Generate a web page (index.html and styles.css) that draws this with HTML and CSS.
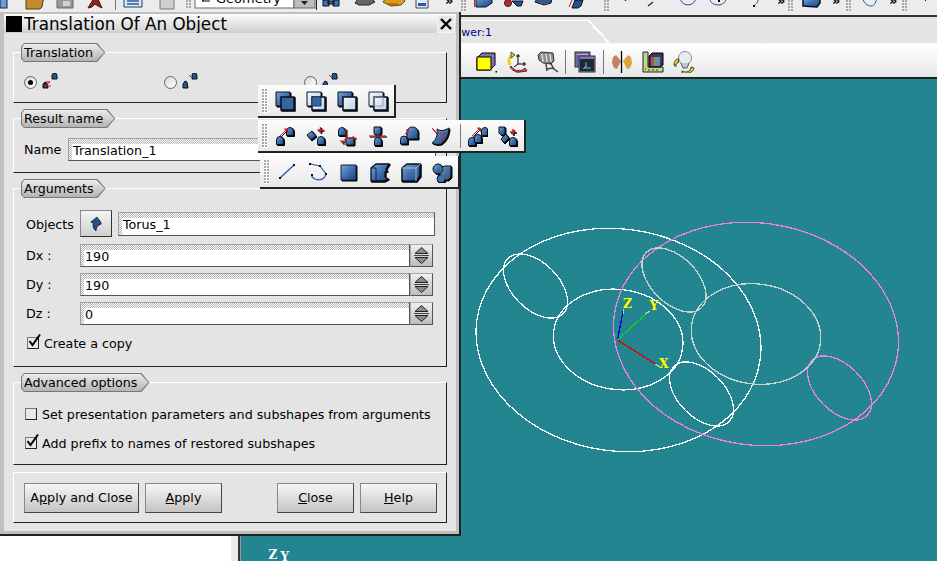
FILE: index.html
```html
<!DOCTYPE html>
<html lang="en">
<head>
<meta charset="utf-8">
<title>Translation Of An Object</title>
<link rel="stylesheet" href="styles.css">
</head>
<body>
<svg class="defs" aria-hidden="true">
  <defs>
    <linearGradient id="bl" x1="0" y1="0" x2="1" y2="1"><stop offset="0" stop-color="#7da6d8"/><stop offset=".5" stop-color="#3f70ad"/><stop offset="1" stop-color="#1c4478"/></linearGradient>
    <linearGradient id="lt" x1="0" y1="0" x2="1" y2="1"><stop offset="0" stop-color="#f4f8fd"/><stop offset="1" stop-color="#bcd0e6"/></linearGradient>
    <path id="dome" d="M.5 8.500V4a3.500 3.500 0 0 1 7 0v4.500z" fill="url(#bl)" stroke="#06111f"/>
    <symbol id="b1" viewBox="0 0 20 20"><path d="M1 1h14v14H1z" fill="url(#bl)" stroke="#06111f"/><path d="M6 6h13v13H6z" fill="#34659f" stroke="#06111f" stroke-width="1.500"/></symbol>
    <symbol id="b2" viewBox="0 0 20 20"><path d="M1 1h14v14H1z" fill="url(#lt)" stroke="#06111f"/><path d="M6 6h13v13H6z" fill="url(#lt)" stroke="#06111f" stroke-width="1.500"/><path d="M6 6h9v9H6z" fill="#34659f" stroke="#1c3c66"/></symbol>
    <symbol id="b3" viewBox="0 0 20 20"><path d="M1 1h14v14H1z" fill="url(#bl)" stroke="#06111f"/><path d="M6 6h13v13H6z" fill="url(#lt)" stroke="#06111f" stroke-width="1.500"/></symbol>
    <symbol id="b4" viewBox="0 0 20 20"><path d="M1 1h14v14H1z" fill="url(#lt)" stroke="#223"/><path d="M6 6h13v13H6z" fill="url(#lt)" stroke="#06111f" stroke-width="1.500"/><path d="M6 6h9v9H6z" fill="none" stroke="#99a"/></symbol>
    <symbol id="t1" viewBox="0 0 20 20"><use href="#dome" x="1" y="10"/><use href="#dome" x="11" y="1"/><path d="M5 10 12 3M9 3h3.500v3.500" fill="none" stroke="#d01828"/></symbol>
    <symbol id="t2" viewBox="0 0 20 20"><path d="M1 9l5-4 4 5-5 4z" fill="url(#bl)" stroke="#06111f"/><use href="#dome" x="11" y="10"/><path d="M14.500 1v6M11.500 4h6" stroke="#d01828" stroke-width="1.500"/></symbol>
    <symbol id="t3" viewBox="0 0 20 20"><use href="#dome" x="1" y="1"/><path d="M9 12h8v7H9z" fill="url(#bl)" stroke="#06111f"/><path d="M9 3v11M9 12h10M16 10v4M9 12l-4 5M3 15h3v3" fill="none" stroke="#d01828"/></symbol>
    <symbol id="t4" viewBox="0 0 20 20"><path d="M6 1h7v6l-1 2H7L6 7z" fill="url(#bl)" stroke="#06111f"/><path d="M1 10h17" stroke="#d01828" stroke-width="1.200"/><use href="#dome" x="6" y="11"/></symbol>
    <symbol id="t5" viewBox="0 0 20 20"><use href="#dome" x="1" y="9.500"/><path d="M8 13V6a5.500 5 0 0 1 11 0v7z" fill="url(#bl)" stroke="#06111f"/><path d="M6 8l4-4M7 4h3v3" fill="none" stroke="#d01828"/></symbol>
    <symbol id="t6" viewBox="0 0 20 20"><path d="M7 3c4 3 8 1 12-1 0 6-3 13-8 16-4 1-7 0-9-1 4-3 6-8 5-14z" fill="url(#bl)" stroke="#06111f"/><path d="M2 2l4 5 6 1M10 18c3-3 5-7 5-12" fill="none" stroke="#d01828"/></symbol>
    <symbol id="t7" viewBox="0 0 20 20"><use href="#dome" x="1" y="11"/><use href="#dome" x="7" y="8"/><use href="#dome" x="14" y="1"/><path d="M5 10 13 2M10 2h3v3" fill="none" stroke="#d01828"/></symbol>
    <symbol id="t8" viewBox="0 0 20 20"><path d="M1 1h6v6l-1 2H3L1 7z" fill="url(#bl)" stroke="#06111f"/><path d="M3 13l5-5 3 4-5 5z" fill="url(#bl)" stroke="#06111f"/><use href="#dome" x="11" y="11"/><path d="M15 3v6M12 6h6" stroke="#d01828" stroke-width="1.500"/></symbol>
    <symbol id="s1" viewBox="0 0 20 20"><path d="M3 16 17 3" stroke="#2a5a9a" stroke-width="1.300"/><path d="M2 15h2v2H2zM16 2h2v2h-2z" fill="#06111f"/></symbol>
    <symbol id="s2" viewBox="0 0 20 20"><path d="M2 2l10 2 6 8c-1 5-6 7-11 5-2-1-4-2-3-4" fill="none" stroke="#2a5a9a" stroke-width="1.200"/><path d="M1 1h2v2H1zM11 3h2v2h-2zM17 11h2v2h-2zM3 12h2v2H3z" fill="#06111f"/></symbol>
    <symbol id="s3" viewBox="0 0 20 20"><path d="M2 3h15v15H2z" fill="url(#bl)" stroke="#0c2240"/></symbol>
    <symbol id="s4" viewBox="0 0 20 20"><path d="M1 6l5-4h13l-3 5 1 2-2 1v5l3 2-4 2H1z" fill="url(#bl)" stroke="#06111f" stroke-width="1.300"/><path d="M6 6V18M1 6h5" stroke="#0c2240" fill="none"/></symbol>
    <symbol id="s5" viewBox="0 0 20 20"><path d="M1 6l5-4h13v12l-4 5H1z" fill="url(#bl)" stroke="#06111f" stroke-width="1.500"/><path d="M1 6h14v13M15 6l4-4" stroke="#9db9dc" fill="none"/></symbol>
    <symbol id="s6" viewBox="0 0 20 20"><path d="M9 7l3-3h7v11l-3 3H9z" fill="url(#bl)" stroke="#06111f"/><circle cx="6" cy="7" r="5" fill="url(#bl)" stroke="#06111f"/><path d="M9 13a4 4 0 1 0 4 4" fill="#3f70ad" stroke="#06111f"/><path d="M9 7h7v9H9z" fill="none" stroke="#6b6b6b"/></symbol>
    <symbol id="r1" viewBox="0 0 16 16"><path d="M1 11l2-2 2 1 1 5H1z" fill="#16345e" stroke="#06111f"/><path d="M10 6V2.500a2 2 0 0 1 5 0V6z" fill="#27538c" stroke="#06111f"/><path d="M2 14l6-5M4 9l4-.5M5 13h4" stroke="#d01828" fill="none"/></symbol>
    <symbol id="r2" viewBox="0 0 16 16"><path d="M1 11l2-3 2 1 1 6H1z" fill="#27538c" stroke="#06111f"/><path d="M10 6V2.500a2 2 0 0 1 5 0V6z" fill="#27538c" stroke="#06111f"/><path d="M7 2l2 2" stroke="#d01828"/></symbol>
    <symbol id="spin" viewBox="0 0 21 21"><path d="M10.500 2.500 17 8.500H4z" fill="#8a8a8a" stroke="#222"/><path d="M3 10.500h15" stroke="#444"/><path d="M4 12.500h13l-6.500 6z" fill="#8a8a8a" stroke="#222"/></symbol>
    <symbol id="tick" viewBox="0 0 16 16"><path d="M3.500 8l3 4L14 1.500" fill="none" stroke="#000" stroke-width="2"/></symbol>
  </defs>
</svg>

<div class="app">
  <svg class="top-strip" viewBox="0 0 937 15" role="img" aria-label="Main toolbars">
    <rect x="0" y="-6" width="7" height="14" fill="#6f9bdc" stroke="#123"/>
    <path d="M26 9V-4h18l-2 11-2 2z" fill="#c08a30" stroke="#5a3a08"/>
    <path d="M57 8V-4h16V8z" fill="#9a9a9a" stroke="#666"/><rect x="63" y="1" width="7" height="5" fill="#d0d0d0"/>
    <path d="M88 8l6-10 3-1 5 11-4-2-3-2-3 3z" fill="#8e2626" stroke="#4a0e0e"/>
    <rect x="115" y="0" width="1" height="10" fill="#777"/>
    <path d="M124 -2h18v9h-18z" fill="#dfe8f4" stroke="#1c3c66"/><path d="M127 1h12M127 4h12" stroke="#2a5a9a" stroke-width="1.500"/>
    <path d="M155-2h13v9h6" fill="#c8c8c8" stroke="#777"/><path d="M160-2h14V9h-14z" fill="#cfcfcf" stroke="#777"/>
    <path d="M189 0h2v2h-2zM189 3h2v2h-2zM189 6h2v2h-2zM186 3h2v2h-2zM186 6h2v2h-2zM186 0h2v2h-2z" fill="#a8a8a8"/>
    <rect x="195" y="-3" width="99" height="11" fill="#fff" stroke="#666"/>
    <path d="M202 1h8M202 1l3-2" stroke="#000" fill="none"/>
    <text class="combo-text" x="216" y="3">Geometry</text>
    <rect x="294" y="-3" width="21" height="11" fill="#bdbdbd" stroke="#666"/><path d="M301 1h7l-3.500 4z" fill="#222"/>
    <rect x="316" y="-1" width="1" height="11" fill="#222"/>
    <path d="M323 0h6v6h-6zM333 0h6v6h-6zM328 1h6v3h-6z" fill="#3f70ad" stroke="#06111f"/>
    <path d="M355 3l3-4h14l3 3-6 3h-10z" fill="#666" stroke="#222"/>
    <path d="M383 2l4-5h14l4 4-4 4-10 1z" fill="#d4a020" stroke="#6a4a08"/><path d="M388 4h10" stroke="#c03020"/>
    <path d="M416-2h12V8h-12z" fill="#dfe8f4" stroke="#445"/><rect x="418" y="3" width="8" height="3" fill="#2a5a9a"/>
    <text class="chev" x="445" y="5">»</text>
    <path d="M461 0h2v2h-2zM461 3h2v2h-2zM461 6h2v2h-2zM461 9h2v2h-2zM464 0h2v2h-2zM464 3h2v2h-2zM464 6h2v2h-2zM464 9h2v2h-2z" fill="#a8a8a8"/>
    <path d="M474.500 0v7" stroke="#d01828"/>
    <path d="M476 7V-3h16V3l-6 4z" fill="url(#bl)" stroke="#06111f"/>
    <circle cx="508" cy="3" r="3.500" fill="#a83040" stroke="#501018"/><path d="M512 1h11l-2 5-4 0z" fill="#27538c" stroke="#06111f"/>
    <path d="M535 2l9 3 7-2 1-6h-14z" fill="#2a5a9a" stroke="#06111f"/><path d="M540 3l8 1" stroke="#c03040"/>
    <path d="M572 8l3-8h8l-2 6-3 2z" fill="#27538c" stroke="#06111f"/><path d="M569 7l3-7" stroke="#d01828"/>
    <path d="M604 0h2v2h-2zM604 3h2v2h-2zM604 6h2v2h-2zM604 9h2v2h-2zM607 0h2v2h-2zM607 3h2v2h-2zM607 6h2v2h-2zM607 9h2v2h-2z" fill="#a8a8a8"/>
    <path d="M625.500 0v1M648 6l5-4" stroke="#234" fill="none" stroke-width="1.500"/>
    <ellipse cx="688" cy="-3" rx="8" ry="8" fill="none" stroke="#2a5a9a"/>
    <ellipse cx="718" cy="-1" rx="8" ry="6" fill="none" stroke="#2a5a9a"/><path d="M718 0h2v2h-2z" fill="#000"/>
    <path d="M758 0c0 3-2 4-4 6" fill="none" stroke="#2a5a9a"/><path d="M753 5h2v2h-2z" fill="#000"/>
    <text class="chev" x="777" y="5">»</text>
    <path d="M788 0h2v2h-2zM788 3h2v2h-2zM788 6h2v2h-2zM788 9h2v2h-2zM791 0h2v2h-2zM791 3h2v2h-2zM791 6h2v2h-2zM791 9h2v2h-2z" fill="#a8a8a8"/>
    <path d="M803 6V-2h17V3l-3 4z" fill="url(#bl)" stroke="#06111f" stroke-width="1.500"/>
    <text class="chev" x="832" y="5">»</text>
    <path d="M846 0h2v2h-2zM846 3h2v2h-2zM846 6h2v2h-2zM846 9h2v2h-2zM849 0h2v2h-2zM849 3h2v2h-2zM849 6h2v2h-2zM849 9h2v2h-2z" fill="#a8a8a8"/>
    <path d="M862-3c2 6 5 9 9 9s5-4 6-9" fill="none" stroke="#2a5a9a"/>
    <text class="chev" x="889" y="5">»</text>
    <path d="M902 0h2v2h-2zM902 3h2v2h-2zM902 6h2v2h-2zM902 9h2v2h-2zM905 0h2v2h-2zM905 3h2v2h-2zM905 6h2v2h-2zM905 9h2v2h-2z" fill="#a8a8a8"/>
    <path d="M925.500 0v1" stroke="#222"/>
  </svg>

  <div class="main">
    <div class="side"></div>
    <div class="workspace">
      <div class="tabbar">
        <div class="tab">OCC scene:1 - viewer:1</div>
        <div class="tab-edge"></div>
      </div>
      <div class="view-tools">
        <svg class="vicon" viewBox="0 0 22 22"><path d="M2 7l5-5h13v12l-5 5H2z" fill="#7878b8" stroke="#000"/><rect x="2" y="6" width="14" height="13" fill="#ff0" stroke="#000"/><path d="M20.500 20h1.500v1.500h-1.500z"/></svg>
        <svg class="vicon" viewBox="0 0 22 22"><path d="M7 4C3 6 2 10 4 14" fill="none" stroke="#e8d020" stroke-width="3"/><path d="M5 1l4 3-4 3z" fill="#e8d020" stroke="#553"/><path d="M12 3v10h8M12 13l-4 3M10 5h4M18 11v4" fill="none" stroke="#000"/><path d="M5 15c4 6 10 6 14 2l2 3-7 1c-4 1-8-2-10-5z" fill="#d85050" stroke="#702020"/></svg>
        <svg class="vicon" viewBox="0 0 22 22"><path d="M1 4l3-3 12 1 1 8-3 3-8-1-4-3z" fill="#8a8a8a" stroke="#333"/><path d="M5 3l1 8M9 3l1 8M13 3l1 8" stroke="#ddd" stroke-width="1.500"/><path d="M13 11l4 7 4 3M9 13l1 7M10 18l6-1" fill="none" stroke="#444" stroke-width="1.500"/></svg>
        <span class="vsep"></span>
        <svg class="vicon wide" viewBox="0 0 22 22"><rect x="1" y="1" width="15" height="15" fill="#6a6ab0" stroke="#333"/><rect x="3" y="3" width="11" height="1" fill="#f0a0c0"/><rect x="5" y="5" width="16" height="16" fill="#7a7ac0" stroke="#333"/><rect x="6" y="8" width="14" height="12" fill="#202830"/><path d="M10 17h7M12 11v6M12 15l-3 3" stroke="#70b8e0" fill="none"/></svg>
        <span class="vsep"></span>
        <svg class="vicon" viewBox="0 0 22 22"><path d="M10 10l-5-6-3 2-1 6 2 5 3 1z" fill="#c88060"/><path d="M12 10l5-6 3 2 1 6-2 5-3 1z" fill="#e0a040"/><path d="M10.500 0v22" stroke="#000" stroke-width="1.300"/></svg>
        <svg class="vicon" viewBox="0 0 22 22"><path d="M1 1h5v15h15v5H1z" fill="#c0d880" stroke="#223"/><path d="M7 5l3-3h11v12l-3 2H7z" fill="#403850" stroke="#000"/><path d="M9 6h3v9H9z" fill="#c04070"/><path d="M12 6h3v9h-3z" fill="#60a060"/><path d="M15 6h3v9h-3z" fill="#7080d0"/><path d="M3 18h1M7 18v2M11 18v2M15 18v2" stroke="#334"/></svg>
        <svg class="vicon" viewBox="0 0 22 22"><circle cx="12" cy="7" r="6.500" fill="#e8eeee" stroke="#889"/><path d="M8 12l2 5h4l2-5" fill="#bcc" stroke="#556"/><path d="M1 14c0-4 2-6 5-6l-1 4c-1 0-2 1-2 2h-2zM1 15h3" fill="#e8d020" stroke="#443"/><path d="M9 20c4 2 9 1 9-4l3 1c-1 5-7 6-12 5z" fill="#e8d020" stroke="#443"/></svg>
      </div>
      <svg class="viewer" viewBox="241 79 696 482" role="img" aria-label="3D viewer">
        <g class="curves white">
          <ellipse cx="619" cy="340" rx="143" ry="111" transform="rotate(8 619 340)"/>
          <ellipse cx="618.700" cy="339.500" rx="65" ry="50" transform="rotate(8 618.700 339.500)"/>
          <ellipse cx="536" cy="286" rx="39" ry="23" transform="rotate(45 536 286)"/>
          <ellipse cx="702" cy="394" rx="39" ry="23" transform="rotate(45 702 394)"/>
        </g>
        <g class="curves pink">
          <ellipse cx="756.500" cy="334" rx="143" ry="111" transform="rotate(8 756.500 334)"/>
          <ellipse cx="840" cy="388" rx="39" ry="23" transform="rotate(45 840 388)"/>
        </g>
        <g class="curves grey">
          <ellipse cx="756.500" cy="334" rx="65" ry="50" transform="rotate(8 756.500 334)"/>
          <ellipse cx="674.500" cy="280" rx="39" ry="23" transform="rotate(45 674.500 280)"/>
        </g>
        <path class="axis" d="M618 340 624 309" stroke="#0000e0"/>
        <path class="axis" d="M618 340 646 314" stroke="#10d030"/>
        <path class="axis" d="M618 340 656 364" stroke="#e00000"/>
        <path class="axis" d="M624 309l0 5M646 314l4-3M656 364l4 3" stroke="#c0c8c0"/>
        <text class="axis-label" x="623.500" y="308">Z</text>
        <text class="axis-label" x="650" y="310">Y</text>
        <text class="axis-label" x="659.500" y="368">X</text>
        <text class="scale-label" x="269" y="559">Z</text>
        <text class="scale-label" x="281" y="561">Y</text>
      </svg>
    </div>
  </div>
</div>

<section class="dialog">
  <header class="titlebar">
    <span class="title-square"></span>
    <h1 class="title">Translation Of An Object</h1>
    <button class="title-close" type="button" aria-label="Close"><svg viewBox="0 0 14 14"><path d="M2 2l10 10M12 2 2 12" stroke="#000" stroke-width="2.400"/></svg></button>
  </header>
  <div class="dialog-body">
    <div class="group">
      <div class="legend"><span>Translation</span></div>
      <div class="radio-row">
        <div class="radio-item"><span class="radio on"></span><svg class="ricon"><use href="#r1"/></svg></div>
        <div class="radio-item"><span class="radio"></span><svg class="ricon"><use href="#r2"/></svg></div>
        <div class="radio-item"><span class="radio"></span><svg class="ricon"><use href="#r2"/></svg></div>
      </div>
    </div>
    <div class="group">
      <div class="legend"><span>Result name</span></div>
      <div class="name-row">
        <span class="name-label">Name</span>
        <div class="field">Translation_1</div>
      </div>
    </div>
    <div class="group">
      <div class="legend"><span>Arguments</span></div>
      <div class="args">
        <div class="arg-row objects">
          <span class="arg-label">Objects</span>
          <button class="select-btn" type="button" aria-label="Select"><svg viewBox="0 0 14 18"><path d="M8 1 1 7h3c-1 4 0 8 3 10 0-4 2-7 6-8l-1-3z" fill="#27538c" stroke="#06111f"/></svg></button>
          <div class="field">Torus_1</div>
        </div>
        <div class="arg-row spin-row">
          <span class="arg-label">Dx :</span>
          <div class="field">190</div>
          <span class="spinner"><svg><use href="#spin"/></svg></span>
        </div>
        <div class="arg-row spin-row">
          <span class="arg-label">Dy :</span>
          <div class="field">190</div>
          <span class="spinner"><svg><use href="#spin"/></svg></span>
        </div>
        <div class="arg-row spin-row">
          <span class="arg-label">Dz :</span>
          <div class="field">0</div>
          <span class="spinner"><svg><use href="#spin"/></svg></span>
        </div>
        <label class="check copy"><span class="box"><svg><use href="#tick"/></svg></span>Create a copy</label>
      </div>
    </div>
    <div class="group">
      <div class="legend"><span>Advanced options</span></div>
      <div class="advanced">
        <label class="check"><span class="box"></span>Set presentation parameters and subshapes from arguments</label>
        <label class="check"><span class="box"><svg><use href="#tick"/></svg></span>Add prefix to names of restored subshapes</label>
      </div>
    </div>
    <div class="group actions">
      <div class="action-set">
        <button class="btn wide" type="button">A<u>p</u>ply and Close</button>
        <button class="btn" type="button"><u>A</u>pply</button>
      </div>
      <div class="action-set">
        <button class="btn" type="button"><u>C</u>lose</button>
        <button class="btn" type="button"><u>H</u>elp</button>
      </div>
    </div>
  </div>
</section>

<div class="float-bar bar-a">
  <span class="grip"></span>
  <svg class="ticon solid"><use href="#b1"/></svg><svg class="ticon solid"><use href="#b2"/></svg><svg class="ticon solid"><use href="#b3"/></svg><svg class="ticon solid"><use href="#b4"/></svg>
</div>
<div class="float-bar bar-b">
  <span class="grip"></span>
  <svg class="ticon solid"><use href="#t1"/></svg><svg class="ticon solid"><use href="#t2"/></svg><svg class="ticon solid"><use href="#t3"/></svg><svg class="ticon solid"><use href="#t4"/></svg><svg class="ticon solid"><use href="#t5"/></svg><svg class="ticon solid"><use href="#t6"/></svg>
  <span class="bar-sep"></span>
  <svg class="ticon solid"><use href="#t7"/></svg><svg class="ticon solid"><use href="#t8"/></svg>
</div>
<div class="float-bar bar-c">
  <span class="grip"></span>
  <svg class="ticon"><use href="#s1"/></svg><svg class="ticon"><use href="#s2"/></svg><svg class="ticon solid"><use href="#s3"/></svg><svg class="ticon solid"><use href="#s4"/></svg><svg class="ticon solid"><use href="#s5"/></svg><svg class="ticon solid"><use href="#s6"/></svg>
</div>
</body>
</html>
```

FILE: styles.css
```css
* { box-sizing: border-box; }
html, body { margin: 0; padding: 0; }
body {
  position: relative;
  width: 937px;
  height: 561px;
  overflow: hidden;
  background: #fff;
  color: #000;
  font-family: "DejaVu Sans", sans-serif;
  font-size: 12.7px;
}
.defs { position: absolute; width: 0; height: 0; }

/* Main window behind the dialog */
.app { display: flex; flex-direction: column; height: 561px; }
.top-strip {
  display: block;
  flex: none;
  width: 937px;
  height: 17px;
  background: #ececec;
  border-bottom: 2px solid #333;
}
.combo-text { font: 13px "DejaVu Sans", sans-serif; }
.chev { font: bold 13px "DejaVu Sans", sans-serif; }
.main { display: flex; flex: 1; min-height: 0; }
.side { flex: none; width: 238px; background: #fff; border-right: 7px solid #ececec; }
.workspace {
  flex: 1;
  display: flex;
  flex-direction: column;
  min-width: 0;
  border-left: 2px solid #333;
  position: relative;
}
.workspace::before {
  content: "";
  width: 1px;
  position: absolute;
  top: 0; bottom: 0; left: 0;
  background: #999;
}
.tabbar { display: flex; height: 28px; flex: none; background: #e4e4e4; border-bottom: 2px solid #fafafa; padding-top: 3px; padding-left: 1px; }
.tab {
  width: 347px;
  border-top: 1px solid #fff;
  padding-right: 96px;
  padding-top: 4px;
  font-size: 11px;
  line-height: 16px;
  text-align: right;
  color: #00008c;
  white-space: nowrap;
}
.tab-edge {
  width: 21px;
  background: linear-gradient(to top right, transparent calc(50% - 1px), #fff calc(50% - 1px), #fff calc(50% + 1px), transparent calc(50% + 1px));
}
.view-tools {
  display: flex;
  align-items: center;
  flex: none;
  height: 34px;
  padding: 2px 0 0 230px;
  background: linear-gradient(#fff, #e6e6e6);
  border-bottom: 2px solid #222;
}
.vicon { width: 22px; height: 22px; margin: 0 4.5px; flex: none; }
.vicon.wide { margin: 0 5px 0 6px; }
.vsep { width: 1px; height: 24px; background: #777; margin: 0 2px; flex: none; }
.viewer { display: block; flex: 1; min-height: 0; width: 100%; background: #23858f; }
.curves { fill: none; stroke-width: 1.300; shape-rendering: crispEdges; }
.white { stroke: #fff; }
.pink { stroke: #f080e0; }
.grey { stroke: #c8d2d0; }
.axis { fill: none; stroke-width: 1.300; shape-rendering: crispEdges; }
.axis-label { font: bold 12.500px "DejaVu Serif", serif; fill: #ff0; }
.scale-label { font: bold 12px "DejaVu Serif", serif; fill: #fff; }

/* Dialog */
.dialog {
  position: absolute;
  left: 0;
  top: 12px;
  width: 461px;
  height: 524px;
  display: flex;
  flex-direction: column;
  padding: 2px 3px 3px 4px;
  background: #c0c0c0;
  border-right: 2px solid #222;
  border-bottom: 2px solid #222;
}
.titlebar {
  display: flex;
  align-items: center;
  flex: none;
  height: 19px;
  padding-left: 2px;
  background: linear-gradient(#fbfbfb, #cfcfcf);
}
.title-square { width: 16px; height: 16px; background: #000; flex: none; }
.title { margin: 0 0 0 2px; padding-top: 1px; font-size: 16.750px; font-weight: normal; line-height: 19px; flex: 1; white-space: nowrap; }
.title-close {
  width: 18px;
  height: 18px;
  padding: 1px;
  margin: 0 1px 0 0;
  border: 1px solid #f4f4f4;
  background: #e8e8e8;
  flex: none;
}
.title-close svg { display: block; width: 14px; height: 14px; }
.dialog-body {
  flex: 1;
  display: flex;
  flex-direction: column;
  gap: 15px;
  padding: 19px 9px 0;
  background: #e4e4e4;
}
.group {
  border: 1px solid;
  border-color: #fff #222 #222 #fff;
  padding: 0 10px;
}
.legend {
  width: fit-content;
  height: 19px;
  margin: -10px 0 0 -3px;
  padding: 1px;
  background: #777;
  clip-path: polygon(3px 0, calc(100% - 8px) 0, 100% 50%, calc(100% - 8px) 100%, 3px 100%, 0 80%, 0 20%);
}
.legend span {
  display: block;
  height: 17px;
  padding: 0 11px 0 2px;
  line-height: 18px;
  background: linear-gradient(#ececec, #b4b4b4);
  clip-path: polygon(2px 0, calc(100% - 8px) 0, 100% 50%, calc(100% - 8px) 100%, 2px 100%, 0 80%, 0 20%);
}
.radio-row { display: flex; height: 31px; margin-top: 9px; padding-bottom: 9px; }
.radio-item { display: flex; align-items: center; gap: 5px; width: 140px; flex: none; }
.radio {
  width: 13px;
  height: 13px;
  border-radius: 50%;
  border: 1px solid #666;
  background: linear-gradient(135deg, #d8d8d8, #fff);
  flex: none;
  display: flex;
  align-items: center;
  justify-content: center;
}
.radio.on::after { content: ""; width: 5px; height: 5px; border-radius: 50%; background: #000; }
.ricon { width: 16px; height: 16px; margin-top: -3px; flex: none; }
.name-row { display: flex; align-items: center; margin-top: 10px; padding-bottom: 11px; }
.name-label { width: 44px; flex: none; }
.field {
  flex: 1;
  min-width: 0;
  height: 23px;
  padding: 3px 0 0 4px;
  line-height: 18px;
  white-space: nowrap;
  border: 1px solid;
  border-color: #a0a0a0 #555 #555 #a0a0a0;
  background:
    linear-gradient(#fff, #fff) 3px 5px no-repeat,
    repeating-conic-gradient(#b4b4b4 0 25%, #fff 0 50%) 0 0 / 2px 2px;
}
.args { margin-top: 12px; padding-bottom: 14px; display: flex; flex-direction: column; padding-left: 2px; }
.arg-row { display: flex; align-items: center; }
.arg-label { width: 54px; flex: none; }
.objects { height: 27px; margin-bottom: 7px; padding-right: 1px; }
.objects .arg-label { padding-top: 1px; }
.objects .field { height: 24px; margin-left: 6px; }
.select-btn {
  width: 32px;
  height: 27px;
  padding: 0;
  border: 1px solid;
  border-color: #888 #333 #333 #888;
  background: linear-gradient(#f4f4f4, #cfcfcf);
  display: flex;
  align-items: center;
  justify-content: center;
  flex: none;
}
.select-btn svg { width: 12px; height: 16px; }
.spin-row { height: 23px; margin-bottom: 6px; padding-right: 3px; }
.spinner {
  width: 23px;
  height: 23px;
  border: 1px solid;
  border-color: #aaa #555 #555 #aaa;
  background: linear-gradient(#f0f0f0, #bcbcbc);
  flex: none;
}
.spinner svg { display: block; width: 21px; height: 21px; }
.check { display: flex; align-items: center; gap: 5px; height: 18px; white-space: nowrap; }
.copy { margin-top: 3px; margin-left: 1px; }
.box {
  position: relative;
  width: 12px;
  height: 12px;
  flex: none;
  border: 1px solid;
  border-color: #777 #222 #222 #777;
  background: #e8e8e8;
}
.box svg { position: absolute; left: -2px; top: -5px; width: 16px; height: 16px; }
.advanced { display: flex; flex-direction: column; gap: 11px; padding: 13px 0 12px 1px; }
.actions { display: flex; justify-content: space-between; align-items: center; height: 51px; margin-top: -8px; padding: 0 9px 0 10px; }
.action-set { display: flex; gap: 6px; }
.btn {
  width: 77px;
  height: 30px;
  padding: 0;
  font: 12.700px "DejaVu Sans", sans-serif;
  color: #000;
  border: 1px solid;
  border-color: #888 #444 #444 #888;
  background: linear-gradient(#f6f6f6, #c4c4c4);
}
.btn.wide { width: 115px; }

/* Floating toolbars over the dialog */
.float-bar {
  position: absolute;
  display: flex;
  align-items: center;
  height: 33px;
  padding-left: 4px;
  background: linear-gradient(#fcfcfc, #e8e8e8);
  border-right: 2px solid #222;
  border-bottom: 2px solid #222;
}
.bar-a { left: 258px; top: 85px; width: 138px; }
.bar-b { left: 258px; top: 120px; width: 268px; }
.bar-c { left: 260px; top: 156px; width: 200px; }
.grip {
  width: 6px;
  height: 24px;
  margin-right: 7px;
  flex: none;
  background-image: linear-gradient(to right, transparent 2px, #fdfdfd 2px), linear-gradient(to bottom, #a8a8a8 2px, #fdfdfd 2px);
  background-size: 3px 3px;
}
.ticon { width: 20px; height: 20px; margin-right: 11px; flex: none; }
.ticon.solid { filter: drop-shadow(1px 1px 0 #000); }
.bar-sep { width: 1px; height: 24px; background: #777; margin: 0 6px 0 -1px; flex: none; }
```
